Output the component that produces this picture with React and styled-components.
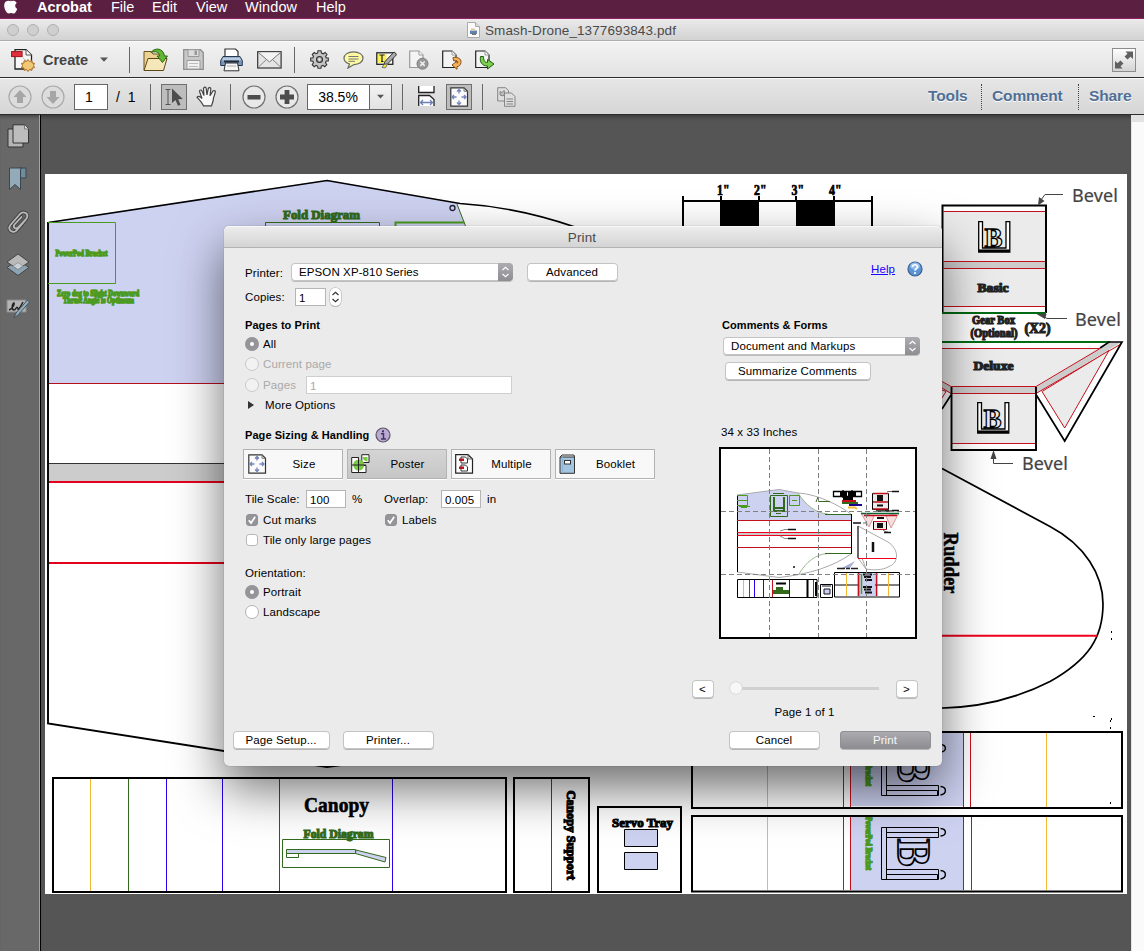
import React from "react";
import styled, { createGlobalStyle } from "styled-components";

const Global = createGlobalStyle`
  * { box-sizing: border-box; }
  html, body { margin: 0; padding: 0; overflow: hidden; }
  body { font-family: "Liberation Sans", Arial, sans-serif; background: #555; }
  svg { display: block; flex: none; }
`;

const Screen = styled.div`
  position: relative;
  width: 1144px;
  height: 951px;
  display: flex;
  flex-direction: column;
  overflow: hidden;
  cursor: default;
`;

/* ---------- menu bar and window title ---------- */
const MenuBar = styled.div`
  height: 19px;
  flex: none;
  display: flex;
  align-items: flex-start;
  padding-left: 4px;
  background: #5a1f41;
  border-bottom: 1px solid #932366;
  color: #fff;
`;
const MenuItem = styled.div`
  width: ${(p) => p.$w}px;
  height: 15px;
  line-height: 15px;
  font-size: 14.5px;
  font-weight: ${(p) => (p.$bold ? 700 : 400)};
  letter-spacing: ${(p) => p.$ls || 0}px;
  white-space: nowrap;
`;
const TitleBar = styled.div`
  height: 22px;
  flex: none;
  display: flex;
  align-items: center;
  border-bottom: 1px solid #adadad;
  background: linear-gradient(#ebebeb, #d2d2d2);
`;
const Lights = styled.div`
  display: flex;
  gap: 8px;
  padding-left: 7px;
  width: 467px;
`;
const Light = styled.span`
  width: 12px;
  height: 12px;
  border-radius: 50%;
  background: #cfcfcf;
  border: 1px solid #b0b0b0;
`;
const TitleText = styled.span`
  margin-left: 5px;
  padding-top: 1px;
  font-size: 13.5px;
  letter-spacing: 0.1px;
  color: #4a4a4a;
  white-space: nowrap;
`;

/* ---------- toolbars ---------- */
const Toolbar = styled.div`
  height: ${(p) => p.$h}px;
  flex: none;
  display: flex;
  align-items: center;
  background: ${(p) => p.$bg};
  border-top: 1px solid #fafafa;
  border-bottom: 1px solid #2c2c2c;
`;
const Slot = styled.div`
  margin-left: ${(p) => p.$ml || 0}px;
  width: ${(p) => p.$w}px;
  flex: none;
  white-space: nowrap;
  display: flex;
  align-items: center;
  justify-content: center;
`;
const CreateLabel = styled.span`
  width: 57px;
  margin-left: 8px;
  font-size: 14.5px;
  font-weight: 700;
  color: #444;
`;
const Rule = styled.div`
  width: 1px;
  height: 26px;
  flex: none;
  margin-left: ${(p) => p.$ml}px;
  background: #666;
`;
const Spacer = styled.div`
  flex: 1;
`;
const ExpandButton = styled.div`
  width: 24px;
  height: 24px;
  margin-right: 8px;
  border: 1px solid #8c8c8c;
  background: linear-gradient(#fdfdfd, #d4d4d4);
  display: flex;
  align-items: center;
  justify-content: center;
`;
const FieldBox = styled.div`
  width: ${(p) => p.$w}px;
  height: 26px;
  flex: none;
  margin-left: ${(p) => p.$ml}px;
  border: 1px solid #666;
  background: #fff;
  color: #000;
  font-size: 14px;
  display: flex;
  align-items: stretch;
`;
const FieldValue = styled.div`
  flex: 1;
  display: flex;
  align-items: center;
  justify-content: center;
  padding-right: ${(p) => p.$pr || 0}px;
`;
const FieldArrow = styled.div`
  width: 22px;
  border-left: 1px solid #666;
  background: linear-gradient(#f3f3f3, #e2e2e2);
  display: flex;
  align-items: center;
  justify-content: center;
`;
const PageTotal = styled.span`
  margin-left: 8px;
  width: 20px;
  font-size: 14px;
  word-spacing: 4px;
  white-space: nowrap;
`;
const Pressed = styled.div`
  width: 26px;
  height: 26px;
  flex: none;
  margin-left: ${(p) => p.$ml}px;
  border: 1px solid #6f6f6f;
  background: #bdbdbd;
  display: flex;
  align-items: center;
  justify-content: center;
`;
const PaneLink = styled.div`
  width: ${(p) => p.$w}px;
  padding-left: ${(p) => p.$pl}px;
  height: 26px;
  line-height: 24px;
  border-left: ${(p) => (p.$first ? "0" : "1px dotted #444")};
  color: #4f6f96;
  font-size: 15.5px;
  font-weight: 700;
  letter-spacing: -0.12px;
  text-shadow: 0 1px 0 #fff;
  white-space: nowrap;
`;

/* ---------- document area ---------- */
const Body = styled.div`
  flex: 1;
  min-height: 0;
  display: flex;
  background: #555;
`;
const NavPane = styled.div`
  width: 41px;
  flex: none;
  display: flex;
  flex-direction: column;
  align-items: center;
  padding: 9px 4px 0 0;
  gap: 18px;
  background: #686868;
  border-right: 1px solid #000;
  box-shadow: inset -1px 0 0 #a5a5a5, inset 0 4px 4px -3px rgba(0, 0, 0, 0.45);
`;
const Viewer = styled.div`
  flex: 1;
  padding: 59px 0 0 4px;
  box-shadow: inset 0 5px 4px -3px rgba(0, 0, 0, 0.35);
`;
const ScrollTrack = styled.div`
  width: 13px;
  flex: none;
  background: #fafafa;
  border-left: 1px solid #e4e4e4;
`;
const ScrollCap = styled.div`
  height: 7px;
  background: #e2e2e2;
`;

/* ---------- print dialog ---------- */
const Dialog = styled.div`
  position: absolute;
  left: 224px;
  top: 226px;
  width: 718px;
  height: 540px;
  display: flex;
  flex-direction: column;
  border-radius: 5px;
  background: #ebebeb;
  box-shadow: 0 22px 50px rgba(0, 0, 0, 0.58), 0 0 1px rgba(0, 0, 0, 0.5);
  color: #000;
  font-size: 11.5px;
  letter-spacing: 0.11px;
`;
const DialogTitle = styled.div`
  height: 22px;
  flex: none;
  line-height: 22px;
  padding-right: 2px;
  text-align: center;
  font-size: 13.5px;
  letter-spacing: 0.1px;
  color: #4a4a4a;
  border-radius: 5px 5px 0 0;
  background: linear-gradient(#ececec, #d4d4d4);
  border-bottom: 1px solid #b3b3b3;
  border-top: 1px solid #f8f8f8;
`;
const DialogBody = styled.div`
  flex: 1;
  display: flex;
`;
const LeftCol = styled.div`
  width: 468px;
  padding-left: 21px;
`;
const RightCol = styled.div`
  width: 250px;
`;
const Row = styled.div`
  display: flex;
  align-items: center;
  height: ${(p) => p.$h || 16}px;
  margin-top: ${(p) => p.$mt || 0}px;
  padding-left: ${(p) => p.$pl || 0}px;
  white-space: nowrap;
  font-size: ${(p) => (p.$bold ? "11px" : "inherit")};
  font-weight: ${(p) => (p.$bold ? 700 : 400)};
  letter-spacing: ${(p) => (p.$bold ? "0.07px" : "inherit")};
  color: ${(p) => (p.$dim ? "#a9a9a9" : "#000")};
`;
const Label = styled.span`
  width: ${(p) => (p.$w ? p.$w + "px" : "auto")};
  flex: none;
  padding-top: ${(p) => p.$pt || 0}px;
  padding-left: ${(p) => p.$pl || 0}px;
`;
const Popup = styled.div`
  width: ${(p) => p.$w}px;
  height: 18px;
  flex: none;
  display: flex;
  align-items: center;
  justify-content: space-between;
  padding-left: 8px;
  background: #fff;
  border-radius: 4px;
  overflow: hidden;
  box-shadow: inset 0 0 0 1px #c4c4c4, 0 1px 0 #bcbcbc;
`;
const PopupCap = styled.div`
  width: 15px;
  height: 18px;
  display: flex;
  align-items: center;
  justify-content: center;
  background: linear-gradient(#adadb1, #8d8d92);
`;
const Button = styled.div`
  width: ${(p) => p.$w}px;
  height: 18px;
  flex: none;
  margin-left: ${(p) => p.$ml || 0}px;
  padding-right: 1px;
  line-height: 18px;
  text-align: center;
  border-radius: 4px;
  color: ${(p) => (p.$primary ? "#f6f6f6" : "#000")};
  background: ${(p) => (p.$primary ? "linear-gradient(#adadb1, #8b8b90)" : "#fff")};
  box-shadow: ${(p) => (p.$primary ? "inset 0 0 0 1px #909095" : "inset 0 0 0 1px #c4c4c4")}, 0 1px 0 #b5b5b5;
`;
const Input = styled.div`
  width: ${(p) => p.$w}px;
  height: 18px;
  flex: none;
  padding-left: 3px;
  line-height: 18px;
  background: #fff;
  border: 1px solid ${(p) => (p.$dim ? "#cfcfcf" : "#b5b5b5")};
`;
const Stepper = styled.div`
  width: 11px;
  height: 18px;
  margin-left: 4px;
  border-radius: 5px;
  background: #fff;
  box-shadow: 0 0 0 0.5px #aaa, 0 1px 0 #bbb;
  display: flex;
  align-items: center;
  justify-content: center;
`;
const Radio = styled.span`
  width: 14px;
  height: 14px;
  flex: none;
  margin-right: 4px;
  border-radius: 50%;
  border: ${(p) => (p.$on ? "5px solid #949499" : p.$dim ? "1px solid #c9c9c9" : "1px solid #b3b3b3")};
  background: ${(p) => (p.$dim ? "#f2f2f2" : "#fff")};
`;
const Check = styled.span`
  width: 12px;
  height: 12px;
  flex: none;
  margin: 0 5px 0 1px;
  border-radius: 3px;
  border: 1px solid ${(p) => (p.$on ? "#8f8f94" : "#b9b9b9")};
  background: ${(p) => (p.$on ? "#949499" : "#fff")};
  display: flex;
  align-items: center;
  justify-content: center;
`;
const Modes = styled.div`
  display: flex;
  gap: 4px;
  margin: 6px 0 0 -2px;
  height: 30px;
`;
const Mode = styled.div`
  width: 100px;
  display: flex;
  align-items: center;
  padding-left: ${(p) => p.$pl || 4}px;
  border: 1px solid #b3b3b3;
  background: ${(p) => (p.$on ? "linear-gradient(#d5d5d5, #c6c6c6)" : "#f8f8f8")};
  box-shadow: 0 1px 0 #fff;
`;
const ModeName = styled.span`
  flex: 1;
  text-align: center;
  padding-right: 1px;
`;
const HelpLink = styled.span`
  width: 36px;
  color: #1a00ff;
  text-decoration: underline;
`;
const Preview = styled.div`
  width: 198px;
  height: 192px;
  margin: 7px 0 0 27px;
  background: #fff;
  border: 2px solid #000;
`;
const Slider = styled.div`
  width: 149px;
  height: 14px;
  margin: -2px 17px 0 16px;
  display: flex;
  align-items: center;
`;
const Knob = styled.div`
  width: 12px;
  height: 12px;
  border-radius: 50%;
  background: #f7f7f7;
  box-shadow: 0 0 0 0.5px #c8c8c8;
`;
const Track = styled.div`
  flex: 1;
  height: 3px;
  background: #d0d0d0;
`;
const Centered = styled.div`
  margin-top: 6px;
  height: 16px;
  line-height: 16px;
  padding-right: 25px;
  text-align: center;
`;

/* ---------- lettering inside the plan ---------- */
const Serif = styled.text`
  font-family: "Liberation Serif", "Times New Roman", serif;
  font-weight: 700;
  font-size: ${(p) => p.$s}px;
  fill: ${(p) => p.$c || "#000"};
  stroke: ${(p) => p.$c || "#000"};
  stroke-width: ${(p) => p.$k || 0.9}px;
`;
const Callout = styled.text`
  font-family: "Noto Sans", "Open Sans", sans-serif;
  font-size: 18px;
  fill: #444;
  stroke: #444;
  stroke-width: 0.2px;
`;
const Outline = styled.text`
  font-family: "Liberation Serif", "Times New Roman", serif;
  font-weight: 700;
  font-size: ${(p) => p.$s}px;
  fill: ${(p) => p.$c};
  stroke: #000;
  stroke-width: ${(p) => p.$k}px;
`;

/* ---------- icons ---------- */
const Apple = () => (
  <svg width="14" height="16" viewBox="0 0 14 16">
    <path d="M9 -3C6.800-2.500 6.300-.500 6.500.500 8.500.400 9.300-1.500 9-3ZM12.800 3C11-.100 8.300.700 7 1.300 5.500.700 3.500.100 1.600 1.700-.600 3.600 0 8.200 1.800 11 3.800 14.500 5.200 13.400 7 12.900 8.800 13.400 10.300 14.400 12 11.400 12.700 10.300 13 9.500 13.200 8.800 10.500 7.500 10.700 4.200 12.800 3Z" fill="#fff" />
  </svg>
);
const DocThumb = () => (
  <svg width="13" height="16" viewBox="0 0 13 16">
    <path d="M.5.500H8.500L12.500 4.500V15.500H.5Z" fill="#fbfbfb" stroke="#aaa" />
    <path d="M8.500.500V4.500H12.500" fill="#ddd" stroke="#aaa" />
    <path d="M3 8.500H10V12H3Z" fill="#5b83b8" />
    <path d="M4 6.500H8V9H4Z" fill="#d9c8b0" /><path d="M5 11H9V13H5Z" fill="#777" />
  </svg>
);
const CreateIcon = () => (
  <svg width="24" height="24" viewBox="0 0 24 24">
    <path d="M4 1.700H15L20.500 7V21H4Z" fill="#f7f7f7" stroke="#222" strokeWidth="1.300" />
    <path d="M15 1.700V7H20.500" fill="#fff" stroke="#555" />
    <path d="M12 9.500C12.500 12 16 11 15 14" fill="none" stroke="#bbb" />
    <rect x=".6" y="3.600" width="10.500" height="5" fill="#e0313c" stroke="#a3121c" />
    <path d="M17 11.500l1.500 2 2.300-.9.300 2.400 2.400.4-1 2.100 1 2.100-2.400.4-.3 2.400-2.300-.9-1.500 2-1.500-2-2.300.9-.3-2.400-2.400-.4 1-2.100-1-2.100 2.400-.4.300-2.400 2.300.9z" fill="#f0c876" stroke="#a8691c" />
  </svg>
);
const Caret = ({ w = 8, c = "#555" }) => (
  <svg width={w} height="5" viewBox="0 0 8 5"><path d="M0 .5H8L4 4.800Z" fill={c} /></svg>
);
const FolderIcon = () => (
  <svg width="25" height="24" viewBox="0 0 25 24">
    <path d="M1 22V3.500H8L10 6H20.500V11" fill="#ecd394" stroke="#6d5219" />
    <path d="M1 22.500L5 10.500H24L20.500 22.500Z" fill="#f6e7b9" stroke="#5c4517" />
    <path d="M8 4.500C11-.200 20-1 21.500 8H24.500L19.500 14.500 14 8H16.700C16 3.500 12 3 8 4.500Z" fill="#62b537" stroke="#2c6b12" />
  </svg>
);
const SaveIcon = () => (
  <svg width="21" height="21" viewBox="0 0 21 21">
    <path d="M.7.700H17.500L20.300 3.500V20.300H.7Z" fill="#c8c8c8" stroke="#8f8f8f" strokeWidth="1.300" />
    <path d="M5 .7H16V7.500H5Z" fill="#dcdcdc" stroke="#999" /><path d="M11.500 1.500H14V6H11.500Z" fill="#999" />
    <path d="M4 11.500H17V20H4Z" fill="#f1f1f1" stroke="#999" /><path d="M6 14.500H15M6 17.500H15" stroke="#bbb" />
  </svg>
);
const PrintIcon = () => (
  <svg width="23" height="24" viewBox="0 0 23 24">
    <path d="M5 9V1H15.500L18 3.500V9" fill="#fff" stroke="#333" strokeWidth="1.200" />
    <path d="M3 8.500H20L22.300 12.500V17.500H.7V12.500Z" fill="#7c97b8" stroke="#26384f" />
    <path d="M3 9.500H20L21 12.500H2Z" fill="#b9cbe0" />
    <path d="M4 13.500H19" stroke="#1c2a3c" strokeWidth="2" />
    <path d="M5.500 15H17.500L19 22.800H4Z" fill="#f6f6f6" stroke="#333" /><path d="M7 18H16" stroke="#aaa" />
  </svg>
);
const MailIcon = () => (
  <svg width="25" height="18" viewBox="0 0 25 18">
    <rect x=".7" y=".7" width="23.400" height="16.300" fill="#e4e4e4" stroke="#333" strokeWidth="1.200" />
    <path d="M2 15.500L9.500 8.500M23 15.500L15.500 8.500" stroke="#888" />
    <path d="M1.500 1.500L12.500 11 23.500 1.500" fill="#f3f3f3" stroke="#777" />
  </svg>
);
const GearIcon = () => (
  <svg width="19" height="19" viewBox="0 0 19 19">
    <g fill="#c4c4c4" stroke="#333" strokeWidth="1.100">
      <path d="M8 .8H11L11.500 3 13.300 3.800 15.200 2.500 17 4.500 15.600 6.300 16.200 8H18.300V11H16.200L15.500 12.800 16.800 14.700 14.700 16.700 13 15.400 11.300 16.100 11 18.300H8L7.600 16.100 6 15.400 4.200 16.700 2.200 14.700 3.500 12.800 2.800 11H.7V8H2.800L3.500 6.300 2.200 4.500 4.200 2.500 6 3.700 7.600 3Z" />
      <circle cx="9.500" cy="9.500" r="3" fill="#a4a4a4" /><circle cx="9.500" cy="9.500" r="1.200" fill="#eee" stroke="none" />
    </g>
  </svg>
);
const BubbleIcon = () => (
  <svg width="21" height="18" viewBox="0 0 21 18">
    <path d="M10.500.8C16 .8 20 3.500 20 7.300S16 13.500 11 13.600L5 17 6.500 13C3 12 1 10 1 7.300 1 3.500 5 .8 10.500.8Z" fill="#fcf9a0" stroke="#666" strokeWidth="1.200" />
    <path d="M5.500 5.500H15.500M5.500 8H15.500M5.500 10.300H12" stroke="#777" />
  </svg>
);
const HighlightIcon = () => (
  <svg width="21" height="20" viewBox="0 0 21 20">
    <rect x=".8" y="2.800" width="16" height="11.500" fill="#fff" stroke="#222" strokeWidth="1.300" />
    <rect x="2" y="4" width="8.500" height="9" fill="#fbf15a" />
    <path d="M3.500 5H8.500M6 5V11.500M5 11.500H7.500" stroke="#222" strokeWidth="1.200" />
    <path d="M19.700 3.200L18 2 9 11.500 8 14.500 11.500 14 20.300 5Z" fill="#aaa" stroke="#333" />
    <path d="M8 14.500L6 17.500 9.500 17.800 11.500 14Z" fill="#f4ea31" stroke="#776" />
  </svg>
);
const SheetIcon = ({ kind }) => {
  const line = kind === "x" ? "#9a9a9a" : "#222";
  return (
    <svg width="20" height="20" viewBox="0 0 20 20">
      <path d="M.7 1H10L14 5V17.500H.7Z" fill="#f4f4f4" stroke={line} strokeWidth="1.200" />
      <path d="M10 1V5H14" fill="#fff" stroke="#999" />
      {kind === "x" && (<><circle cx="13.500" cy="13.700" r="5.500" fill="#999" stroke="#7c7c7c" /><path d="M11.300 11.500L15.700 15.900M15.700 11.500L11.300 15.900" stroke="#eee" strokeWidth="1.600" /></>)}
      {kind === "undo" && <path d="M11 7.500C16 6.500 19.300 9 19 12.300 18.700 15 17 16.300 15 16.700V19.300L10 15 15 11V13.300C16.700 12.500 16 10 11.500 10.700Z" fill="#f3b25c" stroke="#8a4f12" />}
      {kind === "go" && <path d="M5.500 6.500C4.500 12 7 16 12.500 16V19L19 14 12.500 9.500V12.500C9.500 12.500 8.500 10 8.500 6.500Z" fill="#7ccf4c" stroke="#215c10" />}
    </svg>
  );
};
const ExpandIcon = () => (
  <svg width="20" height="20" viewBox="0 0 20 20" fill="#606060">
    <path d="M11.500 1.500H19V9L16.500 6.800 13.500 9.500 10.500 6.500 13.500 3.800Z" /><path d="M8.500 18.500H1V11L3.500 13.200 6.500 10.500 9.500 13.500 6.500 16.200Z" />
  </svg>
);
const RoundIcon = ({ kind }) => {
  const dim = kind === "up" || kind === "down";
  const c = dim ? "#a6a6a6" : "#4d4d4d";
  return (
    <svg width="24" height="24" viewBox="0 0 24 24">
      <circle cx="12" cy="12" r="11" fill={dim ? "#dcdcdc" : "#e9e9e9"} stroke={dim ? "#aaa" : "#707070"} strokeWidth="1.200" />
      {kind === "up" && <path d="M12 5L18.500 12H15V18H9V12H5.500Z" fill={c} />}
      {kind === "down" && <path d="M12 19L5.500 12H9V6H15V12H18.500Z" fill={c} />}
      {kind === "minus" && <rect x="5.500" y="10" width="13" height="4.500" fill={c} />}
      {kind === "plus" && <path d="M9.600 5H14.400V9.600H19V14.400H14.400V19H9.600V14.400H5V9.600H9.600Z" fill={c} />}
    </svg>
  );
};
const SelectIcon = () => (
  <svg width="20" height="20" viewBox="0 0 20 20">
    <path d="M1.500 2.500H6.500M1.500 17.500H6.500M4 2.500V17.500" stroke="#555" />
    <path d="M8 1.500V16L11.500 13 14 18.800 16.500 17.700 14.200 12.300 18.800 12Z" fill="#4c4c4c" />
  </svg>
);
const HandIcon = () => (
  <svg width="21" height="21" viewBox="0 0 21 21">
    <path d="M7.500 19.800C6 16.500 3 13.500 1 11.300 2.500 9.500 4.500 11 6 12.500L3.500 5.500C3.500 3.500 5.500 3.700 6 5L8 9.500 7.500 2.500C8 .6 10 .8 10.200 2.500L11 9 12.300 2.500C13 1 15 1.500 14.800 3.300L14 9.800 17 5C18.500 4 19.800 5 19.200 6.500L17.500 12C17.500 15.500 16 17.500 15.500 19.800Z" fill="#f7f7f7" stroke="#444" strokeWidth="1.200" />
  </svg>
);
const FitWidthIcon = () => (
  <svg width="17" height="21" viewBox="0 0 17 21">
    <path d="M.7 0V6.500H16V0" fill="#fff" stroke="#222" strokeWidth="1.300" />
    <path d="M.7 20V9.500H11.500L16 13.500V20" fill="#fff" stroke="#222" strokeWidth="1.300" />
    <path d="M2.500 16.500H14.500M5 14L2.500 16.500 5 19M12 14L14.500 16.500 12 19" fill="none" stroke="#6a7fb5" strokeWidth="1.300" />
  </svg>
);
const FitPageIcon = () => (
  <svg width="19" height="20" viewBox="0 0 19 20">
    <path d="M.8.800H14L17.500 4.300V19.200H.8Z" fill="#fbfbfb" stroke="#333" strokeWidth="1.200" />
    <path d="M14 .8V4.300H17.500" fill="none" stroke="#777" />
    <path d="M9 2.500V6.500M9 13.500V17.500M2 10H6.500M11.500 10H16M7 4.500L9 2.500 11 4.500M7 15.500L9 17.500 11 15.500M4 8L2 10 4 12M14 8L16 10 14 12" fill="none" stroke="#7486b8" strokeWidth="1.300" />
  </svg>
);
const ConvertIcon = () => (
  <svg width="19" height="20" viewBox="0 0 19 20" fill="#dedede" stroke="#858585">
    <path d="M.7.700H8.500L11.500 3.500V14H.7Z" /><path d="M3 4.500l2 1 2-2 1 3-2 2.500-3-1z" fill="#bbb" />
    <path d="M7.500 6H14.500L18 9.500V19.300H7.500Z" /><path d="M9.500 12H16M9.500 14.500H16M9.500 17H16" />
  </svg>
);
const PagesNav = () => (
  <svg width="23" height="25" viewBox="0 0 23 25" stroke="#333">
    <path d="M1 5H16V23H1Z" fill="#b5b5b5" /><path d="M6 .8H17.500L21.500 4.500V19H6Z" fill="#bdbdbd" /><path d="M17.500 1V5H21.500" fill="#ddd" stroke="#777" />
  </svg>
);
const BookmarkNav = () => (
  <svg width="22" height="25" viewBox="0 0 22 25" stroke="#3a4750">
    <path d="M12.500 1H19V11H12.500Z" fill="#6f8c9d" /><path d="M2.500 1H15Q13.500 1 13.500 3V22.500L8 17.500 2.500 22.500Z" fill="#93aab8" />
  </svg>
);
const ClipNav = () => (
  <svg width="23" height="25" viewBox="0 0 23 25" fill="none" strokeLinecap="round">
    <path d="M18.500 10L10 20C6.500 24.500-.500 20 3.500 15L13 4C16.500.500 22.500 3.500 19.500 8.500L11 17.500C8.500 20 5.500 17 7.500 14.500L14.500 7" stroke="#3f3f3f" strokeWidth="3.500" />
    <path d="M18.500 10L10 20C6.500 24.500-.500 20 3.500 15L13 4C16.500.500 22.500 3.500 19.500 8.500L11 17.500C8.500 20 5.500 17 7.500 14.500L14.500 7" stroke="#bababa" strokeWidth="1.800" />
  </svg>
);
const LayersNav = () => (
  <svg width="24" height="24" viewBox="0 0 24 24" stroke="#444">
    <path d="M1 14.500L12 7 23 14.500 12 22.500Z" fill="#8ba3b3" /><path d="M1 9L12 1 23 9 12 16.500Z" fill="#b9b9b9" /><path d="M7 13L12 9.500 17 13 12 16.500Z" fill="#c9d2d8" stroke="#999" />
  </svg>
);
const SignNav = () => (
  <svg width="24" height="24" viewBox="0 -3 24 24">
    <path d="M1 2H20V14H1Z" fill="#b5b5b5" stroke="#8a8a8a" />
    <path d="M3 12C8 10 9 4 7.500 5 6 7 5.500 12 8 12 10 12 10 8.500 11.500 9.500S11 12.500 13 11L17 4" fill="none" stroke="#222" strokeWidth="1.500" />
    <path d="M21.500 2L23.500 4 12.500 16.500 8 20 10 15Z" fill="#93adc0" stroke="#44525c" />
  </svg>
);
const UpDown = ({ c }) => (
  <svg width="9" height="14" viewBox="0 0 9 14" fill="none" stroke={c} strokeWidth="1.200"><path d="M1.500 5L4.500 2.200 7.500 5M1.500 9L4.500 11.800 7.500 9" /></svg>
);
const Tick = () => (
  <svg width="10" height="10" viewBox="0 0 10 10"><path d="M1.800 5.200L4 8 8.200 1.800" fill="none" stroke="#fff" strokeWidth="1.700" /></svg>
);
const Disclosure = () => (
  <svg width="20" height="10" viewBox="0 0 20 10"><path d="M3 1L9 5 3 9Z" fill="#333" /></svg>
);
const InfoIcon = () => (
  <svg width="16" height="16" viewBox="0 0 16 16">
    <circle cx="8" cy="8" r="7" fill="#b9a9d3" stroke="#5a5666" strokeWidth="1.200" />
    <path d="M6 6.800H8.500V12M6 12H11" fill="none" stroke="#43355c" strokeWidth="1.500" /><rect x="7" y="3.300" width="2" height="2" fill="#43355c" />
  </svg>
);
const HelpIcon = () => (
  <svg width="16" height="16" viewBox="0 0 16 16">
    <circle cx="8" cy="8" r="7" fill="#5b95d6" stroke="#3b5f8c" strokeWidth="1.200" /><ellipse cx="8" cy="5" rx="5" ry="3.500" fill="#93bdeb" />
    <path d="M5.500 6C5.500 3 10.500 3 10.500 6 10.500 7.800 8 7.700 8 9.700" fill="none" stroke="#fff" strokeWidth="1.700" /><circle cx="8" cy="12" r="1.100" fill="#fff" />
  </svg>
);
const PosterIcon = () => (
  <svg width="19" height="20" viewBox="0 0 19 20">
    <path d="M.7 3.500H7.500V18.500H.7ZM7.500 11.500H15V18.500H7.500Z" fill="#fff" stroke="#222" />
    <path d="M10.800.700H18V8.500H10.800Z" fill="#fff" stroke="#222" />
    <circle cx="7.700" cy="11" r="5.500" fill="#7ac943" /><path d="M11.500 3A5.500 5.500 0 0 0 16.500 7.500V3Z" fill="#7ac943" />
    <path d="M.7 11H15M7.500 3.500V18.500" stroke="#222" />
  </svg>
);
const MultipleIcon = () => (
  <svg width="19" height="20" viewBox="0 0 19 20">
    <path d="M.7.700H13L17.500 5V19.200H.7Z" fill="#fff" stroke="#222" strokeWidth="1.200" /><path d="M13 .7V5H17.500" fill="none" stroke="#666" />
    <path d="M6 3H10.500L12.500 5V9H6ZM6 11H10.500L12.500 13V17H6Z" fill="#fff" stroke="#333" />
    <path d="M4 4.500H9V7H4ZM4 12.500H9V15H4Z" fill="#b81424" />
  </svg>
);
const BookletIcon = () => (
  <svg width="19" height="20" viewBox="0 0 19 20">
    <path d="M1 3L3 1H15L15.500 3" fill="#eee" stroke="#333" /><path d="M1 3H15.500V19.300H1Z" fill="#a4c5e0" stroke="#333" /><path d="M3.500 3V19" stroke="#8fb3cf" />
    <rect x="5.500" y="6.500" width="6" height="3.500" fill="#fff" stroke="#333" />
  </svg>
);

/* ---------- the drone plan on the page ---------- */
const LAV = "#ced2f1";
const RED = "#c4101c";
const YEL = "#f5b935";
const GRN = "#4c9a1e";
const DGR = "#33691a";
const BLU = "#2a00f0";

const Cradle = ({ x, y }) => (
  <g transform={`translate(${x} ${y})`}>
    <path d="M.7.700H4.500V27H28V.7H31.800V31H.7Z" fill="#fff" stroke="#000" strokeWidth="1.300" />
    <path d="M1 29.700H31.500" stroke="#000" strokeWidth="2.500" />
    <Outline x="6.500" y="25.500" $s="28" $c="#ebebeb" $k="1.300" textLength="18" lengthAdjust="spacingAndGlyphs">B</Outline>
  </g>
);

const Clamp = ({ y }) => (
  <g transform={`translate(0 ${y})`} fill="none" stroke="#000">
    <rect x="851" y="-10" width="112" height="73" fill={LAV} stroke="none" />
    <path d="M881.500.500H886.500V52.500H881.500ZM886.500.500H938.500V10.500H886.500ZM886.500 5.500H938.500M886.500 42.500H938.500V52.500H886.500ZM886.500 47.500H937.500V52.500" />
    <path d="M940.500 1.500C947 2 947 8.500 940.500 9M940.500 43.500C947 44 947 51 940.500 52" strokeWidth="1.400" />
    <Outline transform="translate(898 11.500) rotate(90)" $s="46" $c={LAV} $k="1.800" textLength="28" lengthAdjust="spacingAndGlyphs">B</Outline>
    <Serif transform="translate(865.500 -10) rotate(90)" $s="8.500" $c={GRN} $k="1.500" textLength="53" lengthAdjust="spacingAndGlyphs">PowerPod Bracket</Serif>
  </g>
);

const Plan = () => (
  <svg width="1082" height="720" viewBox="45 174 1082 720">
    <rect x="45" y="174" width="1082" height="720" fill="#fff" />
    {/* wing */}
    <path d="M48 222L327 180 457 203 465 226V383H48Z" fill={LAV} />
    <path d="M48.500 222.500L327 180.500 460 203.500C500 206 540 215 575 227" fill="none" stroke="#000" strokeWidth="1.700" />
    <path d="M48 222V723.500L327 767 420 754" fill="none" stroke="#000" strokeWidth="1.900" />
    <circle cx="452.500" cy="208" r="2.500" fill="none" stroke="#223" strokeWidth="1.300" />
    <path d="M457 204L465.500 226M265.500 226V222.500H379.500V226" fill="none" stroke={DGR} />
    <path d="M395.500 226V222.500H464.500" fill="none" stroke={GRN} strokeWidth="2" />
    <path d="M48 222.500H115.500V283.500H48" fill="none" stroke={GRN} />
    <Serif x="283" y="219" $s="13.500" $c={DGR} $k="1.100" textLength="77" lengthAdjust="spacingAndGlyphs">Fold Diagram</Serif>
    <Serif x="55.500" y="256" $s="7.500" $c={GRN} $k="1.300" textLength="52" lengthAdjust="spacingAndGlyphs">PowerPod Bracket</Serif>
    <Serif x="57" y="295.500" $s="7.500" $c={GRN} $k="1.300" textLength="82" lengthAdjust="spacingAndGlyphs">Zero deg to Slight Downward</Serif>
    <Serif x="63" y="303" $s="7.500" $c={GRN} $k="1.300" textLength="71" lengthAdjust="spacingAndGlyphs">Thrust Angle is Optimum</Serif>
    <rect x="49" y="463" width="400" height="19" fill="#ccc" />
    <path d="M49 463.500H449" stroke="#333" />
    <path d="M49 383.500H449" stroke="#b50f1c" />
    <path d="M49 482H449M49 563H449" stroke="#e4001b" strokeWidth="2" />

    {/* ruler */}
    <path d="M683 196V228M872 196V228M683 201H872M721 196V202M759 196V202M796 196V202M834 196V202" stroke="#000" strokeWidth="2" />
    <path d="M720 200H759V228H720ZM796 200H835V228H796Z" />
    {[717, 754, 791.5, 829].map((x, i) => (
      <Serif key={x} x={x} y="195" $s="14" $k="0.700" textLength="12.500" lengthAdjust="spacingAndGlyphs">{i + 1}"</Serif>
    ))}

    {/* basic gear box */}
    <rect x="942" y="205.500" width="104" height="108" fill="#fff" />
    <path d="M942 212H1046V306H942Z" fill="#ebebeb" />
    <path d="M942 262H1046V268H942Z" fill="#ccc" />
    <path d="M942.500 313V205.500H1046V313" fill="none" stroke="#000" strokeWidth="2" />
    <path d="M943 211.500H1045M943 261.500H1045M943 268.500H1045M943 306.500H1045" stroke={RED} />
    <path d="M942 313H1046M942 342H1110" stroke="#006b12" strokeWidth="2" />
    <Cradle x={978} y={221} />
    <Serif x="977.500" y="292" $s="13" $c="#222" $k="1.200" textLength="31" lengthAdjust="spacingAndGlyphs">Basic</Serif>
    <Serif x="972" y="323.500" $s="11.500" $c="#222" $k="1.200" textLength="43" lengthAdjust="spacingAndGlyphs">Gear Box</Serif>
    <Serif x="970.500" y="337" $s="11.500" $c="#222" $k="1.200" textLength="47" lengthAdjust="spacingAndGlyphs">(Optional)</Serif>
    <Serif x="1024.500" y="332.500" $s="14" $c="#222" $k="1.100" textLength="26" lengthAdjust="spacingAndGlyphs">(X2)</Serif>

    {/* deluxe gear box */}
    <path d="M942 348H1101L1036 386.500H951L942 381Z" fill="#ebebeb" />
    <path d="M951 387H1036L1110 342.500H1121L1036 394H951L942 388V382Z" fill="#ccc" />
    <path d="M942 348.500H1100L1036 386.500H951L942 381.500M942 388L951 393.500H1036L1121 344M942 398L946 391.500 942 390" fill="none" stroke={RED} />
    <path d="M1042 391.500L1064.700 428 1109 350.500Z" fill="#ebebeb" stroke={RED} />
    <path d="M1036 394.500L1064.700 441 1122 342H1109L1100 348M951 395L942 409" fill="none" stroke="#000" strokeWidth="1.700" />
    <rect x="951.500" y="394" width="84.500" height="56" fill="#fff" /><path d="M951 394H1036V443H951Z" fill="#ebebeb" />
    <path d="M951.500 393.500H1036M951.500 443.500H1036" stroke={RED} />
    <path d="M951.500 387V450H1036V387" fill="none" stroke="#000" strokeWidth="1.900" />
    <Serif x="973.500" y="369.500" $s="13" $c="#222" $k="1.200" textLength="40" lengthAdjust="spacingAndGlyphs">Deluxe</Serif>
    <Cradle x={977} y={402} />
    <path d="M1063 194.500H1045L1041 200M1067 318.500H1047L1043 316M1013 463.500H993.500V457" fill="none" stroke="#444" />
    <path d="M1038 205.500L1039 197 1044.500 201ZM1036.500 314H1046.500L1045 319ZM993.500 450L996.500 459H990.500Z" fill="#444" />
    <Callout x="1072" y="202" textLength="46">Bevel</Callout>
    <Callout x="1075" y="326" textLength="46">Bevel</Callout>
    <Callout x="1022" y="470" textLength="46">Bevel</Callout>

    {/* rudder */}
    <path d="M942 468.500L1050 526.500C1085 545 1103 575 1103 604 1103 638 1088 660 1050 681.500 1012 701 975 708 935 708.500" fill="none" stroke="#000" strokeWidth="1.700" />
    <path d="M942 635.700H1097" stroke="#f0001c" strokeWidth="2" />
    <Serif transform="translate(943.500 532.500) rotate(90)" $s="20" $k="0.500" textLength="61" lengthAdjust="spacingAndGlyphs">Rudder</Serif>
    <path d="M1111 631h1v2h-1zM1111 638h1v2h-1zM1093 716h2v1h-2zM1111 718h1v2h-1zM1110 720h1v2h-1zM1110 727h1v2h-1zM1110 802h1v2h-1z" />

    {/* canopy strip */}
    <rect x="53" y="778" width="453" height="114" fill="none" stroke="#000" strokeWidth="2" />
    <path d="M90.500 779V891" stroke={YEL} /><path d="M128.500 779V891" stroke={DGR} />
    <path d="M166.500 779V891M222.500 779V891M392.500 779V891" stroke={BLU} /><path d="M279.500 779V891" stroke={RED} />
    <Serif x="304" y="811.500" $s="21" $k="0.600" textLength="65" lengthAdjust="spacingAndGlyphs">Canopy</Serif>
    <Serif x="303.500" y="838" $s="12.500" $c={DGR} $k="1.200" textLength="70" lengthAdjust="spacingAndGlyphs">Fold Diagram</Serif>
    <path d="M282.500 839.500H389.500V867.500H282.500Z" fill="none" stroke={DGR} />
    <path d="M286.500 849.500H355.500V853.500H286.500Z" fill={LAV} stroke={DGR} /><path d="M286.500 853.500H298.500V857.500H286.500Z" fill="#fff" stroke={DGR} />
    <path d="M356 850L386 857.500 385 862 355.500 853.500Z" fill={LAV} stroke={DGR} />
    <rect x="514" y="778" width="75" height="114" fill="none" stroke="#000" strokeWidth="2" /><path d="M551.500 779V891" stroke={RED} />
    <Serif transform="translate(566.500 790.500) rotate(90)" $s="13.500" $k="1.200" textLength="89.500" lengthAdjust="spacingAndGlyphs">Canopy Support</Serif>
    <rect x="598" y="807" width="83" height="85" fill="none" stroke="#000" strokeWidth="2" />
    <Serif x="612" y="827" $s="13.500" $k="1.100" textLength="61" lengthAdjust="spacingAndGlyphs">Servo Tray</Serif>
    <path d="M624.500 829.500H657.500V846.500H624.500ZM624.500 852.500H657.500V869.500H624.500Z" fill={LAV} stroke="#000" />

    {/* bracket strips */}
    <Clamp y={743} /><Clamp y={827} />
    <rect x="692" y="732" width="430" height="76" fill="none" stroke="#000" strokeWidth="2" />
    <rect x="692" y="816" width="430" height="75.500" fill="none" stroke="#000" strokeWidth="2" />
    <path d="M767.500 733V807M767.500 817V890M1046.500 733V807M1046.500 817V890" stroke={YEL} />
    <path d="M843.500 733V807M843.500 817V890M850.500 733V807M850.500 817V890M963.500 733V807M963.500 817V890M970.500 733V807M971.500 817V890" stroke={RED} />
  </svg>
);

const Mini = () => (
  <svg width="194" height="188" viewBox="721 449 194 188" fill="none">
    <path d="M737 495L779 489.500 798 493C806 505 815 513 828 514H851V520H737Z" fill={LAV} />
    <path d="M737 495L779 489.500 798 493C818 494 840 506 851 514M737 572L779 577.500C810 574 832 567 851 554" stroke="#aaa" />
    <path d="M798 493C806 505 815 513 828 514M799 574C806 562 816 554 828 553.500" stroke="#9cb892" />
    <path d="M825 514.500H851M825 553.500H851" stroke={DGR} />
    <path d="M737 533H851V535H737Z" fill="#ccc" />
    <path d="M737.500 495V572M851.500 514V554" stroke="#000" />
    <path d="M737 520.500H851M737 547.500H851" stroke={RED} /><path d="M737 532.500H851M737 535.500H851" stroke="#f0001c" />
    <path d="M737 495.500H747.500V505.500H737M737 500.500H747M789.500 495.500H799.500V505.500H789.500ZM792 500.500H797M739 506.500H750M741 507.500H747" stroke={GRN} />
    <path d="M770.500 495.500H787.500V516.500H770.500ZM773 493.500H784M776 513.500H781" stroke={DGR} /><path d="M774 497V511H784V497M774 508H784" stroke={DGR} strokeWidth="2" />
    <path d="M816 502L818 497M819 501.500H830" stroke={DGR} />
    <path d="M780 531L785 529.500H788M780 536L785 538.500H788" stroke="#888" /><path d="M788 529.500H796M788 538.500H796M793 567h2" stroke="#111" strokeWidth="1.500" />
    <path d="M833.500 491.500H861.500V496.500H833.500ZM843 490V498M852 490V498" stroke="#000" strokeWidth="1.300" />
    <path d="M840 491H847V496H840ZM848 491H856V496H848ZM843 497H853V500H843Z" fill="#000" />
    <path d="M842 501H856" stroke={RED} strokeWidth="2" /><path d="M842 503H858" stroke={DGR} strokeWidth="2" /><path d="M849 505H862" stroke="#1e0090" strokeWidth="2" /><path d="M848 507.500H855L857 509" stroke={YEL} strokeWidth="2" />
    <path d="M872.500 493.500H888.500V509.500H872.500Z" fill="#ebebeb" stroke="#000" /><path d="M877 495H883V501H877Z" fill="#111" /><path d="M877 505.500H883" stroke="#111" strokeWidth="2" />
    <path d="M873 493.500H888M873 502H888M873 509H888" stroke={RED} strokeWidth="1.700" />
    <path d="M887 492L888 491.500H892M885 510.500H892M863 523H866L867 519M883 530L886 532H888" stroke="#666" /><path d="M892 491.500H899M892 510.500H899M853 523H861M876 511H889M884 532.500H891" stroke="#111" strokeWidth="1.500" />
    <path d="M861 513L869 527 874 516ZM899 513L891 528 886 516Z" fill="#f5dede" stroke="#d99" />
    <path d="M861 513.500H899" stroke="#063" strokeWidth="1.500" /><path d="M864 515.500H897" stroke={RED} strokeWidth="1.500" />
    <path d="M877 518H884" stroke="#111" strokeWidth="2" /><path d="M873.500 521.500H886.500V529.500H873.500Z" fill="#ebebeb" stroke="#000" /><path d="M877 523H883V528H877Z" fill="#111" /><path d="M873 521.500H887M873 529.500H887" stroke={RED} />
    <path d="M858 526L888 542C900 550 898 563 890 566 882 571 872 570 866 569L858 558M862 558L866 569" stroke="#aaa" />
    <path d="M858 526V558" stroke="#000" strokeWidth="1.200" /><path d="M858 558.500H896" stroke="#f0001c" /><path d="M873 542V552" stroke="#111" strokeWidth="2.500" />
    <path d="M842 568L855 561 850 568Z" fill="#a9b0d8" /><path d="M837 568.500H858" stroke="#222" strokeWidth="1.500" strokeDasharray="8 1 4 1" />
    <path d="M737.500 579.500H817V597.500H737.500ZM820.500 584.500H832.500V597.500H820.500ZM834.500 572.500H899.500V597H834.500ZM834.500 585H899.500" stroke="#000" />
    <path d="M743.500 580V597M846.500 573V596M888.500 573V596" stroke={YEL} /><path d="M749.500 580V597" stroke={DGR} /><path d="M754.500 580V597M763.500 580V597M789.500 580V597" stroke={BLU} />
    <path d="M772.500 580V597M813.500 580V597" stroke={RED} /><path d="M807.500 580V597" stroke="#000" strokeWidth="2" /><path d="M776 583.500H786M816 582V596" stroke="#000" strokeWidth="2" />
    <path d="M773 590H789V594H773ZM776 587H783V591H776Z" fill={DGR} /><path d="M822 586H831M824 589H830V594H824Z" stroke="#112" fill={LAV} />
    <path d="M859 573H875V596H859Z" fill={LAV} /><path d="M858.500 573V596M876.500 573V596" stroke={RED} strokeWidth="1.700" /><path d="M861.500 574V594" stroke={GRN} strokeWidth="1.500" />
    <path d="M863 574.500H872M864 577H871M865 580H872M863 587H872M864 589.500H871M865 592.500H872" stroke="#111" strokeWidth="2" />
    <path d="M769.500 449V637M818.500 449V637M866.500 449V637" stroke="#808080" strokeDasharray="5 3" /><path d="M721 511.500H915M721 574.500H915" stroke="#808080" strokeDasharray="5 3" />
  </svg>
);

export default function App() {
  return (
    <Screen>
      <Global />
      <MenuBar>
        <Slot $w={14}><Apple /></Slot>
        <Slot $w={19} />
        <MenuItem $w={74} $bold>Acrobat</MenuItem>
        <MenuItem $w={41}>File</MenuItem>
        <MenuItem $w={44}>Edit</MenuItem>
        <MenuItem $w={49}>View</MenuItem>
        <MenuItem $w={71} $ls={0.1}>Window</MenuItem>
        <MenuItem $w={40}>Help</MenuItem>
      </MenuBar>
      <TitleBar>
        <Lights><Light /><Light /><Light /></Lights>
        <DocThumb />
        <TitleText>Smash-Drone_1377693843.pdf</TitleText>
      </TitleBar>

      <Toolbar $h={37} $bg="linear-gradient(#f2f2f2, #e3e3e3)">
        <Slot $w={24} $ml={11}><CreateIcon /></Slot>
        <CreateLabel>Create</CreateLabel>
        <Caret />
        <Rule $ml={21} />
        <Slot $w={25} $ml={13}><FolderIcon /></Slot>
        <Slot $w={21} $ml={15}><SaveIcon /></Slot>
        <Slot $w={23} $ml={16}><PrintIcon /></Slot>
        <Slot $w={25} $ml={14}><MailIcon /></Slot>
        <Rule $ml={12} />
        <Slot $w={19} $ml={15}><GearIcon /></Slot>
        <Slot $w={21} $ml={14}><BubbleIcon /></Slot>
        <Slot $w={21} $ml={12}><HighlightIcon /></Slot>
        <Slot $w={20} $ml={12}><SheetIcon kind="x" /></Slot>
        <Slot $w={20} $ml={13}><SheetIcon kind="undo" /></Slot>
        <Slot $w={20} $ml={13}><SheetIcon kind="go" /></Slot>
        <Spacer />
        <ExpandButton><ExpandIcon /></ExpandButton>
      </Toolbar>

      <Toolbar $h={37} $bg="linear-gradient(#e6e6e6, #d6d6d6)">
        <Slot $w={24} $ml={8}><RoundIcon kind="up" /></Slot>
        <Slot $w={24} $ml={9}><RoundIcon kind="down" /></Slot>
        <FieldBox $w={34} $ml={9}><FieldValue $pr={4}>1</FieldValue></FieldBox>
        <PageTotal>/ 1</PageTotal>
        <Rule $ml={14} />
        <Pressed $ml={10}><SelectIcon /></Pressed>
        <Slot $w={21} $ml={9}><HandIcon /></Slot>
        <Rule $ml={13} />
        <Slot $w={24} $ml={11}><RoundIcon kind="minus" /></Slot>
        <Slot $w={24} $ml={9}><RoundIcon kind="plus" /></Slot>
        <FieldBox $w={85} $ml={8}>
          <FieldValue $pr={1}>38.5%</FieldValue>
          <FieldArrow><Caret w={7} /></FieldArrow>
        </FieldBox>
        <Rule $ml={10} />
        <Slot $w={17} $ml={15}><FitWidthIcon /></Slot>
        <Pressed $ml={11}><FitPageIcon /></Pressed>
        <Rule $ml={10} />
        <Slot $w={19} $ml={14}><ConvertIcon /></Slot>
        <Spacer />
        <PaneLink $first $w={53}>Tools</PaneLink>
        <PaneLink $w={97} $pl={10}>Comment</PaneLink>
        <PaneLink $w={66} $pl={10}>Share</PaneLink>
      </Toolbar>

      <Body>
        <NavPane>
          <PagesNav /><BookmarkNav /><ClipNav /><LayersNav /><SignNav />
        </NavPane>
        <Viewer><Plan /></Viewer>
        <ScrollTrack><ScrollCap /></ScrollTrack>
      </Body>

      <Dialog>
        <DialogTitle>Print</DialogTitle>
        <DialogBody>
          <LeftCol>
            <Row $mt={15} $h={18}>
              <Label $w={46} $pt={2}>Printer:</Label>
              <Popup $w={222}>EPSON XP-810 Series<PopupCap><UpDown c="#fff" /></PopupCap></Popup>
              <Button $w={91} $ml={14}>Advanced</Button>
            </Row>
            <Row $mt={7} $h={18}>
              <Label $w={50}>Copies:</Label>
              <Input $w={31}>1</Input>
              <Stepper><UpDown c="#333" /></Stepper>
            </Row>
            <Row $mt={11} $bold>Pages to Print</Row>
            <Row $mt={3}><Radio $on />All</Row>
            <Row $mt={4} $dim><Radio $dim />Current page</Row>
            <Row $mt={4} $h={18} $dim><Radio $dim /><Label $w={43}>Pages</Label><Input $w={206} $dim>1</Input></Row>
            <Row $mt={3}><Disclosure />More Options</Row>
            <Row $mt={14} $bold><Label $w={130}>Page Sizing &amp; Handling</Label><InfoIcon /></Row>
            <Modes>
              <Mode><FitPageIcon /><ModeName>Size</ModeName></Mode>
              <Mode $on $pl={3}><PosterIcon /><ModeName>Poster</ModeName></Mode>
              <Mode $pl={3}><MultipleIcon /><ModeName>Multiple</ModeName></Mode>
              <Mode $pl={3}><BookletIcon /><ModeName>Booklet</ModeName></Mode>
            </Modes>
            <Row $mt={11} $h={18}>
              <Label $w={61}>Tile Scale:</Label><Input $w={40}>100</Input>
              <Label $w={38} $pl={6}>%</Label>
              <Label $w={57}>Overlap:</Label><Input $w={40}>0.005</Input>
              <Row $pl={6}>in</Row>
            </Row>
            <Row $mt={4}><Check $on><Tick /></Check><Label $w={121}>Cut marks</Label><Check $on><Tick /></Check>Labels</Row>
            <Row $mt={4}><Check />Tile only large pages</Row>
            <Row $mt={17}>Orientation:</Row>
            <Row $mt={3}><Radio $on />Portrait</Row>
            <Row $mt={4}><Radio />Landscape</Row>
            <Row $mt={111} $h={18}>
              <Button $w={97} $ml={-12}>Page Setup...</Button>
              <Button $w={91} $ml={13}>Printer...</Button>
            </Row>
          </LeftCol>
          <RightCol>
            <Row $mt={13} $pl={179}><HelpLink>Help</HelpLink><HelpIcon /></Row>
            <Row $mt={40} $pl={30} $bold>Comments &amp; Forms</Row>
            <Row $mt={4} $h={18} $pl={31}>
              <Popup $w={197}>Document and Markups<PopupCap><UpDown c="#fff" /></PopupCap></Popup>
            </Row>
            <Row $mt={7} $h={18} $pl={33}><Button $w={146}>Summarize Comments</Button></Row>
            <Row $mt={44} $pl={29}>34 x 33 Inches</Row>
            <Preview><Mini /></Preview>
            <Row $mt={41} $h={18}>
              <Button $w={22}>&lt;</Button>
              <Slider><Knob /><Track /></Slider>
              <Button $w={22}>&gt;</Button>
            </Row>
            <Centered>Page 1 of 1</Centered>
            <Row $mt={11} $h={18} $pl={37}>
              <Button $w={91}>Cancel</Button>
              <Button $w={91} $ml={20} $primary>Print</Button>
            </Row>
          </RightCol>
        </DialogBody>
      </Dialog>
    </Screen>
  );
}
